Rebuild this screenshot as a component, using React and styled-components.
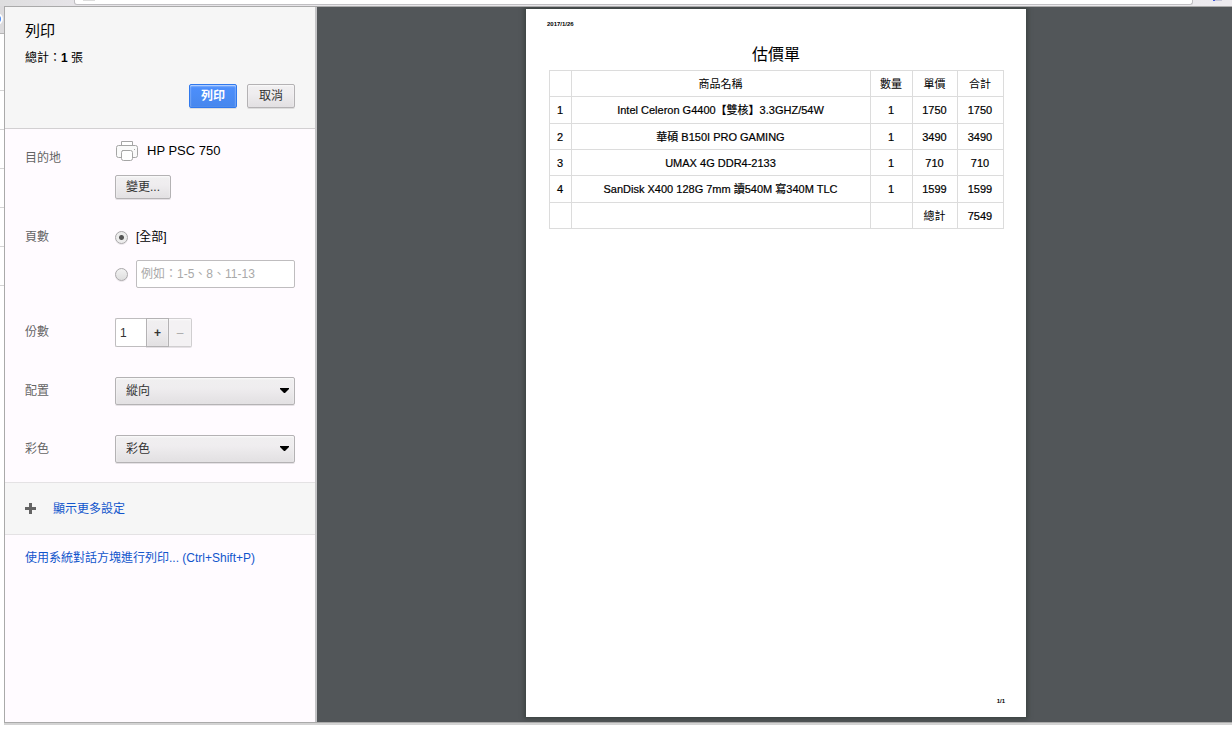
import React, { useState } from "react";
import styled, { createGlobalStyle, css } from "styled-components";

const GlobalStyle = createGlobalStyle`
  *, *::before, *::after { box-sizing: border-box; }
  body {
    margin: 0;
    background: #fff;
    font: 12px/20px "Liberation Sans", "Noto Sans CJK TC", sans-serif;
    color: #000;
  }
  h1, h2, p { margin: 0; font-weight: 400; }
  button, input, select { font: inherit; margin: 0; }
`;

const Shell = styled.div`
  display: flex;
  flex-direction: column;
  min-height: 100vh;
  padding-bottom: 9px;
`;

/* Sliver of the browser window behind the dialog */
const BrowserEdge = styled.div`
  display: flex;
  height: 6px;
  padding: 0 39px 0 74px;
  background: linear-gradient(90deg, #dededf, #e6e4e8 74px, #eceaee);
`;

const AddressBar = styled.div`
  flex: 1;
  height: 5px;
  padding-left: 8px;
  background: #fff;
  border: solid #c0bfc2;
  border-width: 0 1px 1px;
  border-radius: 0 0 3px 3px;
`;

const AddressIcon = styled.div`
  width: 12px;
  height: 1px;
  background: #dcdcdc;
`;

const ExtensionIcon = styled.div`
  width: 9px;
  height: 1px;
  margin: 0 -29px 0 20px;
  background: linear-gradient(90deg, #4358d8 2px, #c5c5d6 2px);
`;

const Body = styled.div`
  flex: 1;
  display: flex;
`;

const Gutter = styled.div`
  width: 4px;
  overflow: hidden;
`;

const GutterToolbar = styled.div`
  height: 28px;
  padding-top: 7px;
  background: #dcdbdd;
  border-bottom: 1px solid #b5b5b5;
`;

const GutterKnob = styled.div`
  width: 12px;
  height: 12px;
  margin-left: -9px;
  border: 2px solid #fff;
  border-radius: 50%;
  background: #4b8bf4;
`;

const GutterLines = styled.div`
  height: 252px;
  margin-top: 18px;
  background: repeating-linear-gradient(#fff 0 38px, #d4d4d4 38px 39px);
`;

const Dialog = styled.main`
  flex: 1;
  display: flex;
  min-width: 0;
  border: solid #aaa;
  border-width: 1px 0 1px 1px;
  box-shadow: 0 2px 0 #d3d3d3;
`;

const Sidebar = styled.form`
  flex: 0 0 312px;
  background: #fffbff;
  border-right: 2px solid #c4c4c6;
`;

const Header = styled.header`
  height: 122px;
  padding: 14px 20px 0;
  background: #f6f6f6;
  border-bottom: 1px solid #d2d0d2;
`;

const Title = styled.h1`
  font-size: 15px;
  line-height: 20px;
`;

const Summary = styled.p`
  margin-top: 7px;
`;

const Actions = styled.div`
  display: flex;
  justify-content: flex-end;
  gap: 10px;
  margin-top: 16px;
`;

const raised = css`
  background: linear-gradient(#f0eff0, #efedef 38%, #e2e0e2);
  border: 1px solid #b4b2b4;
  border-radius: 2px;
  box-shadow: 0 1px 0 rgba(0, 0, 0, 0.1), inset 0 1px 2px rgba(255, 255, 255, 0.75);
  color: #333;
`;

const Button = styled.button`
  ${raised}
  min-width: 48px;
  height: 24px;
  padding: 0 10px;
  line-height: 20px;
  ${(p) =>
    p.$primary &&
    css`
      background: linear-gradient(#4d90fe, #4787ed);
      border-color: #3079ed;
      color: #fff;
      font-weight: 700;
    `}
`;

const Settings = styled.div`
  padding: 11px 20px 19px;
`;

const Setting = styled.div`
  display: grid;
  grid-template-columns: 90px 1fr;
  align-items: start;
  margin-top: ${(p) => p.$gap || 0}px;
`;

const Label = styled.label`
  padding-top: ${(p) => p.$drop || 0}px;
  line-height: 28px;
  color: #646464;
`;

const Destination = styled.div`
  display: flex;
  align-items: center;
  gap: 9px;
  height: 22px;
  margin-bottom: 13px;
  font-size: 13px;
`;

const Choices = styled.div`
  display: grid;
  gap: 9px;
`;

const Choice = styled.div`
  display: flex;
  align-items: center;
  gap: 8px;
  height: 28px;
`;

const Radio = styled.input.attrs({ type: "radio" })`
  appearance: none;
  flex: none;
  width: 13px;
  height: 13px;
  border: 1px solid #aaa8aa;
  border-radius: 50%;
  background: linear-gradient(#f2f2f2, #dedede);
  box-shadow: 0 1px 0 rgba(0, 0, 0, 0.08);
  &:checked {
    background: radial-gradient(circle, #555 0 2px, #ececec 3px);
  }
`;

const TextBox = styled.input`
  flex: 1;
  min-width: 0;
  width: 100%;
  height: 28px;
  padding: 0 4px;
  background: #fff;
  border: 1px solid #bfbdbf;
  border-radius: 2px;
  color: #333;
  &::placeholder { color: #a9a9a9; opacity: 1; }
`;

const Stepper = styled.div`
  display: flex;
  width: 77px;
  height: 29px;
`;

const Count = styled(TextBox)`
  height: 29px;
  border-radius: 2px 0 0 2px;
  border-right: 0;
`;

const Step = styled.button`
  ${raised}
  flex: none;
  width: 23px;
  padding: 0;
  border-radius: 0;
  font-weight: 700;
  &:disabled {
    border-color: #d0ced0;
    border-left: 0;
    border-radius: 0 2px 2px 0;
    background: #f3f1f3;
    color: #aaa;
    font-weight: 400;
  }
`;

const SelectBox = styled.div`
  position: relative;
  svg {
    position: absolute;
    top: 11px;
    right: 6px;
    pointer-events: none;
  }
`;

const Select = styled.select`
  ${raised}
  appearance: none;
  display: block;
  width: 100%;
  height: 28px;
  padding: 0 20px 0 10px;
`;

const link = css`
  color: #15c;
  text-decoration: none;
`;

const More = styled.div`
  height: 53px;
  padding: 0 20px;
  display: flex;
  align-items: center;
  background: #f6f6f6;
  border: solid #e4e2e4;
  border-width: 1px 0;
`;

const MoreButton = styled.button`
  ${link}
  display: flex;
  align-items: center;
  gap: 17px;
  padding: 0;
  border: 0;
  background: none;
`;

const SystemLink = styled.a`
  ${link}
  display: block;
  padding: 13px 20px;
`;

const Preview = styled.section`
  flex: 1;
  display: flex;
  justify-content: center;
  align-items: flex-start;
  min-width: 0;
  padding: 2px 0 5px 3px;
  overflow: hidden;
  background: #525659;
`;

const Paper = styled.article`
  display: flex;
  flex-direction: column;
  width: min(500px, 96%);
  aspect-ratio: 500 / 708;
  padding: 10px 21px;
  background: #fff;
  box-shadow: 0 0 4px 2px #3d4442;
  text-align: center;
`;

const Tiny = styled.p`
  font-size: 6px;
  line-height: 11px;
  font-weight: 700;
  text-align: ${(p) => p.$align};
`;

const SheetTitle = styled.h2`
  margin: 14px 0 5px;
  font-size: 16px;
  line-height: 21px;
`;

const Quote = styled.table`
  width: 455px;
  max-width: 100%;
  margin: 0 auto;
  table-layout: fixed;
  border-collapse: collapse;
  font-size: 11px;
  line-height: 16px;
`;

const Col = styled.col`
  width: ${(p) => (p.$width ? p.$width + "px" : "auto")};
`;

const Cell = styled.td`
  height: ${(p) => (p.$tall ? 27 : 26)}px;
  padding: 0;
  border: 1px solid #dcdcdc;
  font-weight: 400;
  -webkit-text-stroke: ${(p) => (p.$plain ? "0" : "0.2px #000")};
`;

const PageNumber = styled(Tiny)`
  margin-top: auto;
`;

const items = [
  ["1", "Intel Celeron G4400【雙核】3.3GHZ/54W", "1", "1750", "1750"],
  ["2", "華碩 B150I PRO GAMING", "1", "3490", "3490"],
  ["3", "UMAX 4G DDR4-2133", "1", "710", "710"],
  ["4", "SanDisk X400 128G 7mm 讀540M 寫340M TLC", "1", "1599", "1599"],
  ["", "", "", "總計", "7549"],
];

const PrinterIcon = () => (
  <svg width="23" height="22" viewBox="0 0 23 22" fill="#fff" stroke="#a5a5a5" aria-hidden="true">
    <path d="M6.500 6V1.500H17.500V6" />
    <path d="M3.500 5.500H20.500Q22.500 5.500 22.500 7.500V15.500Q22.500 17.500 20.500 17.500H3.500Q1.500 17.500 1.500 15.500V7.500Q1.500 5.500 3.500 5.500Z" fill="#fafafa" />
    <path d="M19 9.500H20" />
    <path d="M7.500 10.500H15.500Q17.500 10.500 17.500 12.500V18.500Q17.500 20.500 15.500 20.500H8.500Q6.500 20.500 6.500 18.500V12.500Q6.500 10.500 8.500 10.500Z" />
  </svg>
);

const PlusIcon = () => (
  <svg width="11" height="11" viewBox="0 0 11 11" fill="#646464" aria-hidden="true">
    <path d="M4 0H7V4H11V7H7V11H4V7H0V4H4Z" />
  </svg>
);

function Dropdown({ id, options }) {
  return (
    <SelectBox>
      <Select id={id}>
        {options.map((o) => (
          <option key={o}>{o}</option>
        ))}
      </Select>
      <svg width="9" height="5" viewBox="0 0 9 5" aria-hidden="true">
        <path d="M0 0H9V1L5 5H4L0 1Z" />
      </svg>
    </SelectBox>
  );
}

export default function App() {
  const [range, setRange] = useState("all");
  const [copies, setCopies] = useState(1);

  return (
    <>
      <GlobalStyle />
      <Shell>
        <BrowserEdge>
          <AddressBar>
            <AddressIcon />
          </AddressBar>
          <ExtensionIcon />
        </BrowserEdge>
        <Body>
          <Gutter>
            <GutterToolbar>
              <GutterKnob />
            </GutterToolbar>
            <GutterLines />
          </Gutter>
          <Dialog>
            <Sidebar onSubmit={(e) => e.preventDefault()}>
              <Header>
                <Title>列印</Title>
                <Summary>
                  總計：<b>1</b> 張
                </Summary>
                <Actions>
                  <Button $primary type="submit">列印</Button>
                  <Button type="button">取消</Button>
                </Actions>
              </Header>
              <Settings>
                <Setting>
                  <Label as="span" $drop={4}>目的地</Label>
                  <div>
                    <Destination>
                      <PrinterIcon />
                      HP PSC 750
                    </Destination>
                    <Button type="button">變更...</Button>
                  </div>
                </Setting>
                <Setting $gap={24}>
                  <Label as="span">頁數</Label>
                  <Choices>
                    <Choice>
                      <Radio id="all" name="range" checked={range === "all"} onChange={() => setRange("all")} />
                      <label htmlFor="all">[全部]</label>
                    </Choice>
                    <Choice>
                      <Radio name="range" aria-label="自訂頁數" checked={range === "custom"} onChange={() => setRange("custom")} />
                      <TextBox type="text" aria-label="頁數範圍" placeholder="例如：1-5、8、11-13" />
                    </Choice>
                  </Choices>
                </Setting>
                <Setting $gap={30}>
                  <Label htmlFor="copies">份數</Label>
                  <Stepper>
                    <Count id="copies" type="text" value={copies} onChange={(e) => setCopies(Number(e.target.value) || 1)} />
                    <Step type="button" onClick={() => setCopies(copies + 1)}>+</Step>
                    <Step type="button" disabled={copies < 2} onClick={() => setCopies(copies - 1)}>–</Step>
                  </Stepper>
                </Setting>
                <Setting $gap={30}>
                  <Label htmlFor="layout">配置</Label>
                  <Dropdown id="layout" options={["縱向", "橫向"]} />
                </Setting>
                <Setting $gap={30}>
                  <Label htmlFor="color">彩色</Label>
                  <Dropdown id="color" options={["彩色", "黑白"]} />
                </Setting>
              </Settings>
              <More>
                <MoreButton type="button">
                  <PlusIcon />
                  顯示更多設定
                </MoreButton>
              </More>
              <SystemLink href="#system">使用系統對話方塊進行列印... (Ctrl+Shift+P)</SystemLink>
            </Sidebar>
            <Preview>
              <Paper>
                <Tiny $align="left">2017/1/26</Tiny>
                <SheetTitle>估價單</SheetTitle>
                <Quote>
                  <colgroup>
                    <Col $width={22} />
                    <Col />
                    <Col $width={42} />
                    <Col $width={45} />
                    <Col $width={46} />
                  </colgroup>
                  <thead>
                    <tr>
                      {["", "商品名稱", "數量", "單價", "合計"].map((h, i) => (
                        <Cell as="th" $plain key={i}>{h}</Cell>
                      ))}
                    </tr>
                  </thead>
                  <tbody>
                    {items.map((row, r) => (
                      <tr key={r}>
                        {row.map((text, c) => (
                          <Cell key={c} $tall={r % 3 === 0} $plain={text === "總計"}>{text}</Cell>
                        ))}
                      </tr>
                    ))}
                  </tbody>
                </Quote>
                <PageNumber $align="right">1/1</PageNumber>
              </Paper>
            </Preview>
          </Dialog>
        </Body>
      </Shell>
    </>
  );
}
